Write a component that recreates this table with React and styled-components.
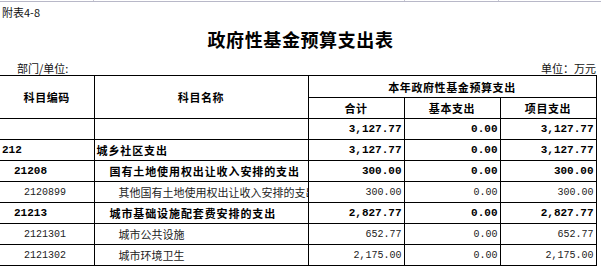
import React from 'react'
import styled, { createGlobalStyle } from 'styled-components'

const GlobalStyle = createGlobalStyle`
  body {
    margin: 0;
    background: #fff;
    font-family: "Noto Sans CJK SC", "Liberation Sans", sans-serif;
    color: #000;
  }
`

const Page = styled.div`
  width: 601px;
  height: 271px;
  overflow: hidden;
  background: #fff;
`

// leftover spreadsheet gridline at the very top
const TopStrip = styled.div`
  height: 2px;
  border-bottom: 1px solid #b8b8c8;
  box-sizing: border-box;
  display: grid;
  grid-template-columns: 94px 311px 94px 1fr;
`
const StripCell = styled.div`
  border-right: 1px solid #c8c8d4;
`

const Caption = styled.div`
  margin-top: 3px;
  padding-left: 2px;
  font-size: 11px;
  line-height: 14px;
  color: #111;
`

const Title = styled.h1`
  margin: 9px 0 0;
  text-align: center;
  font-size: 18px;
  line-height: 22px;
  font-weight: 700;
  letter-spacing: 0.6px;
`

const MetaRow = styled.div`
  margin-top: 11px;
  display: flex;
  justify-content: space-between;
  width: 596px;
  font-size: 11px;
  line-height: 14px;
  color: #111;
`
const MetaLeft = styled.span`
  padding-left: 17px;
`

const Table = styled.table`
  margin-top: 0;
  border-collapse: collapse;
  table-layout: fixed;
  width: 596px;
  font-size: 11px;
`

const Th = styled.th`
  border: 1px solid #000;
  border-left: ${p => (p.$first ? 'none' : '1px solid #000')};
  font-weight: 700;
  height: ${p => p.$h || 20}px;
  padding: 0;
  text-align: center;
  letter-spacing: 0.6px;
  line-height: 14px;
`

const Tr = styled.tr`
  height: 21px;
`

const CodeCell = styled.td`
  border: 1px solid #000;
  border-left: none;
  padding: 0 0 0 ${p => p.$indent}px;
  font-family: "Liberation Mono", monospace;
  font-size: ${p => (p.$bold ? 11 : 10)}px;
  font-weight: ${p => (p.$bold ? 700 : 400)};
  color: ${p => (p.$bold ? '#000' : '#222')};
  white-space: nowrap;
  overflow: hidden;
`

const NameCell = styled.td`
  border: 1px solid #000;
  padding: 0 0 0 ${p => p.$indent}px;
  font-size: 11px;
  font-weight: ${p => (p.$bold ? 700 : 400)};
  letter-spacing: ${p => (p.$bold ? 0.9 : 0)}px;
  color: ${p => (p.$bold ? '#000' : '#222')};
  white-space: nowrap;
  overflow: hidden;
  line-height: 14px;
`

const NumCell = styled.td`
  border: 1px solid #000;
  padding: 0 2px 0 0;
  text-align: right;
  font-family: "Liberation Mono", monospace;
  font-size: ${p => (p.$bold ? 11 : 10)}px;
  font-weight: ${p => (p.$bold ? 700 : 400)};
  color: ${p => (p.$bold ? '#000' : '#222')};
  white-space: nowrap;
`

const rows = [
  { code: '', name: '', total: '3,127.77', basic: '0.00', project: '3,127.77', bold: true, ci: 2, ni: 2 },
  { code: '212', name: '城乡社区支出', total: '3,127.77', basic: '0.00', project: '3,127.77', bold: true, ci: 2, ni: 2 },
  { code: '21208', name: '国有土地使用权出让收入安排的支出', total: '300.00', basic: '0.00', project: '300.00', bold: true, ci: 14, ni: 15 },
  { code: '2120899', name: '其他国有土地使用权出让收入安排的支出', total: '300.00', basic: '0.00', project: '300.00', bold: false, ci: 24, ni: 24 },
  { code: '21213', name: '城市基础设施配套费安排的支出', total: '2,827.77', basic: '0.00', project: '2,827.77', bold: true, ci: 14, ni: 15 },
  { code: '2121301', name: '城市公共设施', total: '652.77', basic: '0.00', project: '652.77', bold: false, ci: 24, ni: 24 },
  { code: '2121302', name: '城市环境卫生', total: '2,175.00', basic: '0.00', project: '2,175.00', bold: false, ci: 24, ni: 24 },
]

export default function App() {
  return (
    <Page>
      <GlobalStyle />
      <TopStrip>
        <StripCell />
        <StripCell />
        <StripCell />
        <div />
      </TopStrip>
      <Caption>附表4-8</Caption>
      <Title>政府性基金预算支出表</Title>
      <MetaRow>
        <MetaLeft>部门/单位:</MetaLeft>
        <span>单位：万元</span>
      </MetaRow>
      <Table>
        <colgroup>
          <col style={{ width: 94 }} />
          <col style={{ width: 214 }} />
          <col style={{ width: 96 }} />
          <col style={{ width: 96 }} />
          <col style={{ width: 96 }} />
        </colgroup>
        <thead>
          <tr>
            <Th $first rowSpan={2}>科目编码</Th>
            <Th rowSpan={2}>科目名称</Th>
            <Th colSpan={3} $h={21}>本年政府性基金预算支出</Th>
          </tr>
          <tr>
            <Th>合计</Th>
            <Th>基本支出</Th>
            <Th>项目支出</Th>
          </tr>
        </thead>
        <tbody>
          {rows.map((r, i) => (
            <Tr key={i}>
              <CodeCell $bold={r.bold} $indent={r.ci}>{r.code}</CodeCell>
              <NameCell $bold={r.bold} $indent={r.ni}>{r.name}</NameCell>
              <NumCell $bold={r.bold}>{r.total}</NumCell>
              <NumCell $bold={r.bold}>{r.basic}</NumCell>
              <NumCell $bold={r.bold}>{r.project}</NumCell>
            </Tr>
          ))}
        </tbody>
      </Table>
    </Page>
  )
}
